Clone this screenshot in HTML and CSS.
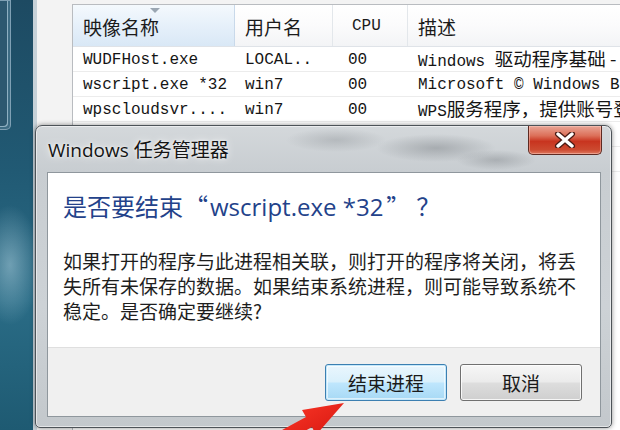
FILE: index.html
```html
<!DOCTYPE html>
<html lang="zh-CN">
<head>
<meta charset="utf-8">
<link rel="stylesheet" href="styles.css">
</head>
<body>
<div class="desktop">
  <div class="side"><div class="side-frame"></div><div class="cloud"></div></div>
  <div class="tm">
    <div class="list">
      <div class="row head">
        <div class="hc sorted"><span class="hcj">映像名称</span><span class="sort-arrow"></span></div>
        <div class="hc"><span class="hcj">用户名</span></div>
        <div class="hc cpu">CPU</div>
        <div class="hc"><span class="hcj">描述</span></div>
      </div>
      <div class="row">
        <div class="c">WUDFHost.exe</div>
        <div class="c">LOCAL..</div>
        <div class="c num">00</div>
        <div class="c">Windows <span class="cj">驱动程序基础 - 用户模式驱动程序框架主机进程</span></div>
      </div>
      <div class="row">
        <div class="c">wscript.exe *32</div>
        <div class="c">win7</div>
        <div class="c num">00</div>
        <div class="c">Microsoft © Windows Based Script Host</div>
      </div>
      <div class="row">
        <div class="c">wpscloudsvr....</div>
        <div class="c">win7</div>
        <div class="c num">00</div>
        <div class="c">WPS<span class="cj">服务程序，提供账号登录、云存储等服务</span></div>
      </div>
      <div class="row">
        <div class="c">winlogon.exe</div>
        <div class="c">SYSTEM</div>
        <div class="c num">00</div>
        <div class="c">Windows <span class="cj">登录应用程序</span></div>
      </div>
      <div class="row">
        <div class="c">wininit.exe</div>
        <div class="c">SYSTEM</div>
        <div class="c num">00</div>
        <div class="c">Windows <span class="cj">启动应用程序</span></div>
      </div>
    </div>
  </div>

  <div class="dialog">
    <div class="titlebar">
      <div class="title">Windows 任务管理器</div>
      <div class="close">
        <svg width="22" height="16" viewBox="0 0 22 16">
          <path d="M4 2 L18 14 M18 2 L4 14" stroke="#4a1b14" stroke-width="6" stroke-linecap="round"/>
          <path d="M4 2 L18 14 M18 2 L4 14" stroke="#ffffff" stroke-width="3.4" stroke-linecap="round"/>
        </svg>
      </div>
    </div>
    <div class="content">
      <div class="message">
        <div class="instruction">是否要结束<span class="q ql">“</span>wscript.exe *32<span class="q qr">”</span><span class="qm">？</span></div>
        <div class="text">如果打开的程序与此进程相关联，则打开的程序将关闭，将丢失所有未保存的数据。如果结束系统进程，则可能导致系统不稳定。是否确定要继续?</div>
      </div>
      <div class="footer">
        <div class="btn default">结束进程</div>
        <div class="btn">取消</div>
      </div>
    </div>
  </div>

  <svg class="arrow" width="90" height="50" viewBox="0 0 90 50">
    <defs>
      <linearGradient id="ag" x1="0" y1="0" x2="1" y2="1">
        <stop offset="0" stop-color="#ff3a2a"/>
        <stop offset="1" stop-color="#d0120c"/>
      </linearGradient>
    </defs>
    <polygon points="74,3 32,10 36,17 1,36 7,47 42,27 46,35" fill="url(#ag)"/>
  </svg>
</div>
</body>
</html>
```
FILE: styles.css
```css
html, body {
  margin: 0;
  padding: 0;
}
body {
  width: 620px;
  height: 430px;
  overflow: hidden;
  background: #1f4f66;
}
.desktop {
  position: relative;
  display: flex;
  width: 620px;
  height: 430px;
  overflow: hidden;
}

/* left desktop strip */
.side {
  flex: none;
  width: 33px;
  height: 430px;
  background:
    radial-gradient(ellipse 30px 60px at 10px 265px, rgba(170,205,220,0.55), rgba(170,205,220,0) 100%),
    linear-gradient(to bottom, #1d4a62 0%, #215a74 40%, #2a6c86 70%, #1e5a72 100%);
  display: flex;
  flex-direction: column;
}
.side-frame {
  width: 10px;
  height: 128px;
  border: 1px solid #7fa0b4;
  border-left: none;
  border-radius: 0 0 5px 0;
  box-shadow: inset -2px -2px 0 #3e6c84, inset -3px -3px 0 #8fb0c2;
  background: #2d5870;
}
.cloud {
  flex: 1;
}

/* task manager behind */
.tm {
  flex: none;
  width: 587px;
  height: 430px;
  box-sizing: border-box;
  border-left: 4px solid #c6d1d8;
  background: #f3f3f3;
  padding: 4px 0 0 35px;
}
.list {
  width: 700px;
  height: 426px;
  background: #ffffff;
  border-top: 1px solid #b9bcc0;
  border-left: 1px solid #b9bcc0;
}
.row {
  display: grid;
  grid-template-columns: 162px 98px 75px 365px;
  height: 25px;
  box-sizing: border-box;
  border-bottom: 1px solid #ececec;
  align-items: center;
  font-family: "Liberation Mono", "Noto Sans CJK SC", monospace;
  font-size: 16px;
  color: #151515;
}
.row.head {
  height: 42px;
  border-bottom: 1px solid #dfe3e8;
  font-family: "Noto Sans CJK SC", sans-serif;
  font-size: 19px;
}
.hc {
  position: relative;
  height: 100%;
  box-sizing: border-box;
  padding-left: 10px;
  display: flex;
  align-items: center;
  border-right: 1px solid #e3e7eb;
  background: linear-gradient(to bottom, #ffffff 0%, #fbfbfc 50%, #f3f4f6 100%);
  color: #1b1b1b;
}
.hc.sorted {
  background: linear-gradient(to bottom, #f4f9fd 0%, #e6f0fa 50%, #d9e8f6 100%);
  border-right: 1px solid #c9d9ea;
}
.hc.cpu {
  font-family: "Liberation Mono", monospace;
  font-size: 16px;
  padding-left: 19px;
}
.hcj {
  line-height: 1;
  padding-top: 1px;
}
.sort-arrow {
  position: absolute;
  left: 77px;
  top: 3px;
  width: 0;
  height: 0;
  border-left: 5px solid transparent;
  border-right: 5px solid transparent;
  border-top: 5px solid #9aa6b2;
}
.c {
  padding-left: 10px;
  white-space: nowrap;
  overflow: hidden;
  padding-top: 2px;
}
.c.num {
  padding-left: 15px;
}
.cj {
  font-family: "Noto Sans CJK SC", sans-serif;
  font-size: 18.5px;
  line-height: 1;
}

/* dialog */
.dialog {
  position: absolute;
  left: 35px;
  top: 125px;
  width: 577px;
  height: 303px;
  box-sizing: border-box;
  border: 1px solid #4d5358;
  border-radius: 7px 7px 5px 5px;
  padding: 0 10px 10px 11px;
  display: flex;
  flex-direction: column;
  background:
    radial-gradient(ellipse 60px 14px at 400px 22px, rgba(120,125,130,0.45), rgba(120,125,130,0) 100%),
    radial-gradient(ellipse 50px 12px at 300px 14px, rgba(130,135,140,0.35), rgba(130,135,140,0) 100%),
    radial-gradient(ellipse 40px 10px at 460px 34px, rgba(110,115,120,0.35), rgba(110,115,120,0) 100%),
    linear-gradient(to bottom, #d4d8db 0%, #c8cdd1 15%, #cdd2d6 60%, #c3c8cc 100%);
  box-shadow: inset 0 0 0 1px rgba(255,255,255,0.55), 0 0 5px rgba(0,0,0,0.45);
}
.titlebar {
  height: 46px;
  flex: none;
  display: flex;
  justify-content: space-between;
  align-items: flex-start;
}
.title {
  margin-top: 12px;
  padding-left: 1px;
  font-family: "Open Sans", "Noto Sans CJK SC", sans-serif;
  font-size: 19px;
  line-height: 24px;
  color: #141414;
  text-shadow: 0 0 8px rgba(255,255,255,0.9), 0 0 3px rgba(255,255,255,0.9);
}
.close {
  width: 74px;
  height: 29px;
  margin-right: -1px;
  box-sizing: border-box;
  border: 1px solid #5e2a22;
  border-top: none;
  border-radius: 0 0 5px 5px;
  background: linear-gradient(to bottom, #e9a596 0%, #dc6f58 35%, #c8341f 55%, #cc4a30 85%, #df7a60 100%);
  box-shadow: inset 0 0 0 1px rgba(255,210,200,0.45);
  display: flex;
  align-items: center;
  justify-content: center;
}
.content {
  flex: 1;
  background: #ffffff;
  border: 1px solid #8f979d;
  display: flex;
  flex-direction: column;
}
.message {
  padding: 17px 0 0 15px;
}
.instruction {
  font-family: "Open Sans", "Noto Sans CJK SC", sans-serif;
  font-size: 24px;
  line-height: 32px;
  color: #23428a;
  margin-bottom: 25px;
  white-space: nowrap;
}
.q {
  display: inline-block;
  width: 27px;
  font-family: "Noto Sans CJK SC", sans-serif;
}
.ql {
  text-align: right;
  padding-right: 2px;
  box-sizing: border-box;
}
.qr {
  text-align: left;
  padding-left: 3px;
  box-sizing: border-box;
}
.qm {
  font-family: "Noto Sans CJK SC", sans-serif;
  padding-left: 6px;
}
.text {
  width: 520px;
  font-family: "Noto Sans CJK SC", sans-serif;
  font-size: 19px;
  line-height: 25px;
  color: #1e1e1e;
}
.footer {
  margin-top: auto;
  height: 69px;
  box-sizing: border-box;
  background: #f0f0f0;
  border-top: 1px solid #dfdfdf;
  display: flex;
  justify-content: flex-end;
  align-items: flex-start;
  gap: 13px;
  padding: 16px 18px 0 0;
}
.btn {
  width: 122px;
  height: 37px;
  box-sizing: border-box;
  border: 1px solid #707070;
  border-radius: 3px;
  background: linear-gradient(to bottom, #f6f6f6 0%, #ebebeb 48%, #dddddd 52%, #cfcfcf 100%);
  box-shadow: inset 0 0 0 1px rgba(255,255,255,0.8);
  display: flex;
  align-items: center;
  justify-content: center;
  font-family: "Noto Sans CJK SC", sans-serif;
  font-size: 19px;
  color: #1a1a1a;
}
.btn.default {
  border-color: #3c7fb1;
  background: linear-gradient(to bottom, #eaf6fd 0%, #d9f0fc 48%, #bee6fd 52%, #a7d9f5 100%);
  box-shadow: inset 0 0 0 1px #c4e8fb, inset 0 0 0 2px rgba(255,255,255,0.6);
}

.arrow {
  position: absolute;
  left: 270px;
  top: 400px;
}
```
